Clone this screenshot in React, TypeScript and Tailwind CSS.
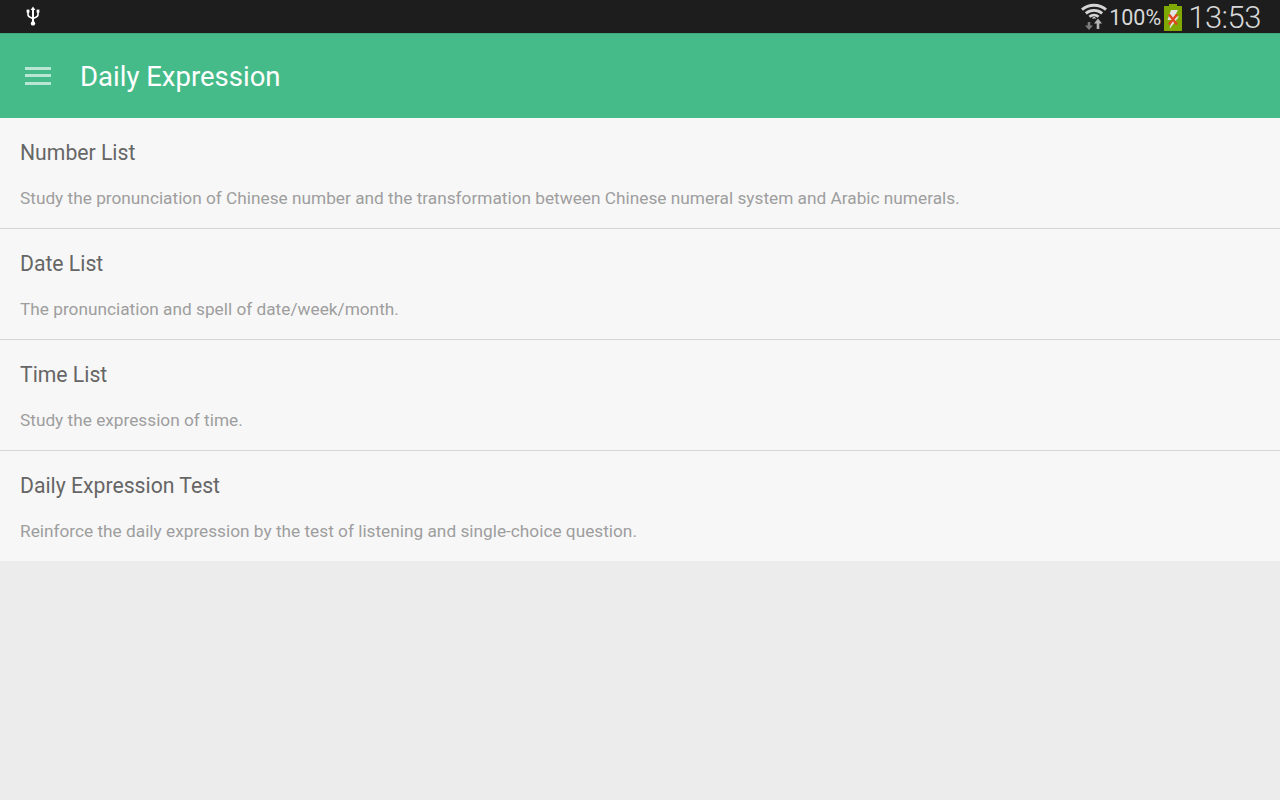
const items = [
  { title: "Number List", desc: "Study the pronunciation of Chinese number and the transformation between Chinese numeral system and Arabic numerals." },
  { title: "Date List", desc: "The pronunciation and spell of date/week/month." },
  { title: "Time List", desc: "Study the expression of time." },
  { title: "Daily Expression Test", desc: "Reinforce the daily expression by the test of listening and single-choice question." },
];

function UsbIcon() {
  return (
    <svg width="14" height="20" viewBox="0 0 14 20" fill="none">
      <path d="M7 2v15" stroke="#fff" strokeWidth="2" />
      <path d="M4.6 4 7 0.6 9.4 4z" fill="#fff" />
      <path d="M2 6v2.500c0 1.600 1.200 2.500 2.600 3L7 12.600" stroke="#fff" strokeWidth="1.600" />
      <path d="M12 6v2.500c0 1.600-1.200 2.500-2.600 3L7 12.600" stroke="#fff" strokeWidth="1.600" />
      <rect x="0.6" y="3.6" width="2.8" height="3" fill="#fff" />
      <rect x="10.6" y="3.6" width="2.8" height="3" fill="#fff" />
      <circle cx="7" cy="17.4" r="2.2" fill="#fff" />
    </svg>
  );
}

function WifiIcon() {
  return (
    <svg width="26" height="27" viewBox="0 0 26 27" fill="none">
      <path d="M1 6.600C7.600 0.800 18.400 0.800 25 6.600" stroke="#d4d4d4" strokeWidth="3" />
      <path d="M4.800 10.400C9.600 6.400 16.400 6.400 21.200 10.400" stroke="#d4d4d4" strokeWidth="2.800" />
      <path d="M8.400 13.800C11 11.600 15 11.600 17.600 13.800" stroke="#d4d4d4" strokeWidth="2.600" />
      <path d="M10.600 15.600 13 13.600l2.400 2z" fill="#d4d4d4" />
      <path d="M8 19v5" stroke="#7c7c7c" strokeWidth="2.600" />
      <path d="M4 22.600h8L8 27z" fill="#7c7c7c" />
      <path d="M17 20v6" stroke="#b4b4b4" strokeWidth="2.600" />
      <path d="M13 20.600h8L17 15.600z" fill="#b4b4b4" />
    </svg>
  );
}

function BatteryIcon() {
  return (
    <svg width="18" height="27" viewBox="0 0 18 27">
      <rect x="5" y="0" width="8" height="3" fill="#7fa800" />
      <rect x="0" y="2" width="18" height="25" fill="#7fa800" />
      <path d="M14 6H7L3.500 16H7.500L5.500 25 15 12.500H10.500z" fill="#e4e4e4" />
      <path d="M5 10.500 13 20.500M13 10.500 5 20.500" stroke="#e2451f" strokeWidth="2.400" />
    </svg>
  );
}

export default function App() {
  return (
    <div className="w-[1280px] h-[800px] flex flex-col bg-[#ececec] overflow-hidden font-['Roboto',sans-serif]">
      <div className="h-[33px] bg-[#1d1d1d] flex items-center">
        <div className="ml-[26px] mt-[-1px]">
          <UsbIcon />
        </div>
        <div className="ml-auto flex items-center pr-[19px] text-[#d8d8d8]">
          <WifiIcon />
          <span className="ml-[2px] text-[21.5px] leading-[28px] mt-[2px]">100%</span>
          <div className="ml-[3px] mt-[1px]">
            <BatteryIcon />
          </div>
          <span className="ml-[6px] text-[31px] leading-[31px] mt-[2px] font-light tracking-[-0.5px] whitespace-nowrap">13:53</span>
        </div>
      </div>
      <div className="h-[85px] bg-[#45bb89] border-t border-[#3fa87c] flex items-center">
        <div className="ml-[25px] w-[26px] flex flex-col gap-[4.5px] mt-[-1px]">
          <div className="h-[3px] bg-[#b9e6d2]" />
          <div className="h-[3px] bg-[#b9e6d2]" />
          <div className="h-[3px] bg-[#b9e6d2]" />
        </div>
        <span className="ml-[29px] text-[27.5px] text-white mt-[2px]">Daily Expression</span>
      </div>
      <div className="bg-[#f7f7f7]">
        {items.map((item, i) => (
          <div key={item.title} className={i < items.length - 1 ? "h-[111px] px-5 border-b border-[#d5d5d5]" : "h-[110px] px-5"}>
            <div className="pt-[20px] text-[21.2px] leading-[30px] text-[#666666]">{item.title}</div>
            <div className="mt-[16px] text-[17.25px] leading-[28px] text-[#9e9e9e]">{item.desc}</div>
          </div>
        ))}
      </div>
    </div>
  );
}
